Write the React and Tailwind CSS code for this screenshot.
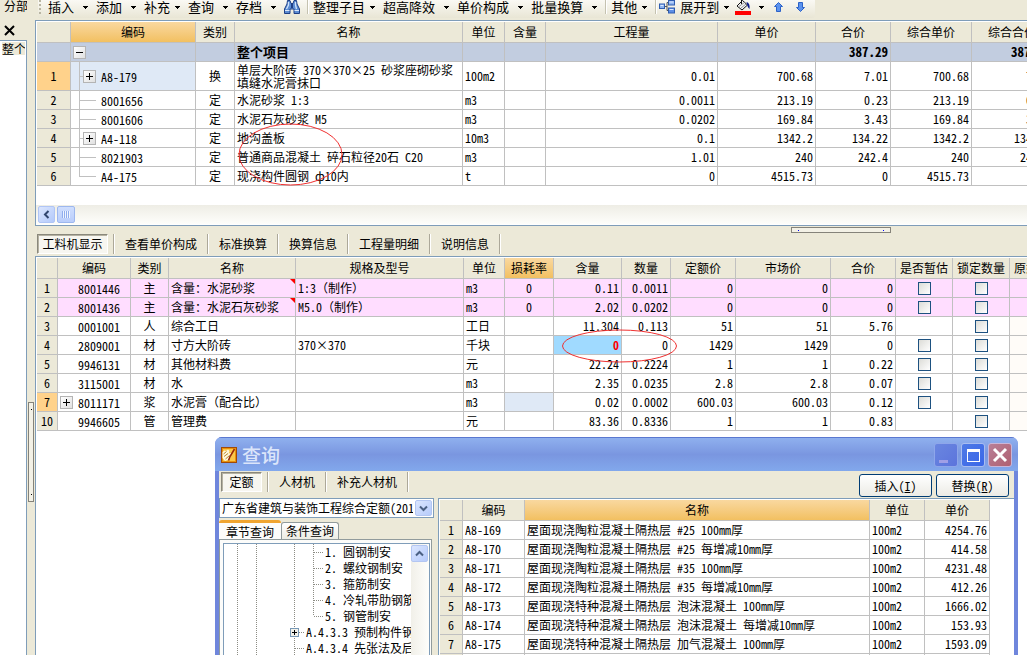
import React from "react";

const cx = (...c) => c.filter(Boolean).join(" ");

/* ---------- toolbar ---------- */

function Caret() {
  return (
    <svg width="5" height="3" viewBox="0 0 5 3" className="block shrink-0" shapeRendering="crispEdges">
      <path d="M0 0h5v1h-1v1h-1v1h-1v-1h-1v-1h-1z" fill="#000" />
    </svg>
  );
}

function MenuButton({ label, tight }) {
  return (
    <button type="button" className={cx("flex h-[14px] items-center whitespace-nowrap pr-[8px]", tight ? "gap-[5px]" : "gap-[9px]")}>
      {label}
      <Caret />
    </button>
  );
}

const Sep = () => <span className="h-[14px] w-[2px] shrink-0 border-l border-r border-l-[#c5c2b0] border-r-white" />;

function Binoculars() {
  return (
    <svg width="16" height="14" viewBox="0 0 16 14" className="block">
      <path d="M3.500 .5h2.500l1 3h2l1-3h2.500l.5 3.500 2.500 5v4.500h-5.500v-4.500h-4v4.500H.5V9L3 4z" fill="#5c8cd2" stroke="#1f3f86" />
      <path d="M4.500 2v3l-2 4M11.500 2v3l1 4" stroke="#cfe2fb" strokeWidth="1.300" fill="none" />
      <path d="M7 4h2v4H7z" fill="#1f3f86" />
      <path d="M1 10.500h4.500M10.500 10.500h4.500" stroke="#dbe8fb" />
    </svg>
  );
}

function ExpandIcon() {
  return (
    <svg width="16" height="14" viewBox="0 0 16 14" className="block">
      <path d="M5 6.500h3M8 2.500v8M8 2.500h2M8 10.500h2" stroke="#555" fill="none" />
      <rect x=".5" y="4" width="5" height="4.500" fill="#8fb4f0" stroke="#2f5db0" />
      <rect x="9.500" y=".5" width="6" height="4.500" fill="#8fb4f0" stroke="#2f5db0" />
      <rect x="9.500" y="8" width="6" height="5" fill="#5d8ee6" stroke="#2f5db0" />
      <path d="M10.500 2h4M10.500 9.500h4M1.500 5.500h3" stroke="#dce9ff" />
    </svg>
  );
}

function BucketIcon() {
  return (
    <svg width="16" height="15" viewBox="0 0 16 15" className="block">
      <path d="M7.500 0.500l5 4.500-5.500 5L2 6z" fill="#f4f4f4" stroke="#111" />
      <path d="M4 6.500l5.500-4M6 8l5-4" stroke="#999" />
      <path d="M6.500 4V0" stroke="#111" />
      <path d="M11.500 2c2.500.5 3.500 3 3 7-1.500-1-2-3-2.500-5z" fill="#0c1c8c" />
      <rect x="0" y="11" width="16" height="4" fill="#f00" />
    </svg>
  );
}

function ArrowIcon({ down }) {
  return (
    <svg width="9" height="10" viewBox="0 0 9 10" className="block">
      <path
        d={down ? "M4.500 9.500L.5 5.500h2v-5h4v5h2z" : "M4.500.5l4 4h-2v5h-4v-5h-2z"}
        fill="#5c93ee"
        stroke="#2c62c8"
      />
    </svg>
  );
}

function Toolbar() {
  return (
    <div className="h-[20px] bg-[#ece9d8] pl-[3px]">
      <div className="flex h-[18px] w-max items-start rounded-br-[3px] bg-gradient-to-b from-[#faf9f4] to-[#e9e6d5] pr-[10px] text-[13px] leading-[14px]">
        <svg width="10" height="15" viewBox="0 0 10 15" className="block" shapeRendering="crispEdges">
          <path d="M1 0h2v2h-2zM1 4h2v2h-2zM1 8h2v2h-2zM1 12h2v2h-2z" fill="#b8b5a3" />
        </svg>
        <MenuButton label="插入" />
        <MenuButton label="添加" />
        <MenuButton label="补充" tight />
        <MenuButton label="查询" />
        <MenuButton label="存档" />
        <button type="button" aria-label="查找" className="pr-[7px]">
          <Binoculars />
        </button>
        <Sep />
        <span className="w-[4px]" />
        <MenuButton label="整理子目" tight />
        <MenuButton label="超高降效" />
        <MenuButton label="单价构成" />
        <MenuButton label="批量换算" />
        <Sep />
        <span className="w-[4px]" />
        <MenuButton label="其他" tight />
        <Sep />
        <button type="button" className="flex h-[14px] items-center gap-[5px] whitespace-nowrap pl-[2px] pr-[6px]">
          <ExpandIcon />
          展开到
          <Caret />
        </button>
        <button type="button" aria-label="填充颜色" className="flex h-[15px] items-center gap-[8px] pr-[10px]">
          <BucketIcon />
          <Caret />
        </button>
        <button type="button" aria-label="上移" className="flex h-[14px] items-center pr-[13px]">
          <ArrowIcon />
        </button>
        <button type="button" aria-label="下移" className="flex h-[14px] items-center">
          <ArrowIcon down />
        </button>
      </div>
    </div>
  );
}

/* ---------- grid pieces ---------- */

const line = "border-r border-b border-[#c0c0c0]";
const headBg = "bg-[#ece9d8]";
const orangeHead = "bg-gradient-to-b from-[#f9d89f] to-[#f2c060]";

function Head({ children, active }) {
  return (
    <th className={cx("h-[21px] overflow-hidden whitespace-nowrap p-0 text-center font-normal leading-[18px]", line, active ? orangeHead : headBg)}>
      {children}
    </th>
  );
}

function Cell({ children, align = "left", className }) {
  return (
    <td
      className={cx(
        "h-[19px] overflow-hidden whitespace-nowrap px-[2px] py-0 leading-[18px]",
        line,
        align === "right" && "text-right",
        align === "center" && "text-center",
        className
      )}
    >
      {children}
    </td>
  );
}

function RowNo({ children, active }) {
  return (
    <th scope="row" className={cx("h-[19px] p-0 text-center font-normal leading-[18px]", line, active ? "bg-[#ffd28b]" : headBg)}>
      {children}
    </th>
  );
}

/* Full-width brackets keep their own width while latin text stays half-width. */
function Wide({ text }) {
  return text.split(/([（）])/).map((part, i) =>
    part === "（" || part === "）" ? (
      <span key={i} className="[font-feature-settings:normal]">
        {part}
      </span>
    ) : (
      part
    )
  );
}

function Toggle({ open }) {
  return (
    <button
      type="button"
      aria-label={open ? "折叠" : "展开"}
      className="flex size-[13px] shrink-0 items-center justify-center border border-[#b4b4b4] bg-gradient-to-br from-white to-[#e0e0e0]"
    >
      <svg width="7" height="7" viewBox="0 0 7 7" shapeRendering="crispEdges">
        <path d={open ? "M0 3h7v1h-7z" : "M0 3h7v1h-7zM3 0h1v7h-1z"} fill="#000" />
      </svg>
    </button>
  );
}

const Cols = ({ widths }) => (
  <colgroup>
    {widths.map((w, i) => (
      <col key={i} style={{ width: w }} />
    ))}
  </colgroup>
);

/* ---------- upper grid ---------- */

const items = [
  { n: 1, code: "A8-179", kind: "换", name: ["单层大阶砖 370×370×25 砂浆座砌砂浆", "填缝水泥膏抹口"], unit: "100m2", v: ["0.01", "700.68", "7.01", "700.68", "7.01"], plus: true, active: true },
  { n: 2, code: "8001656", kind: "定", name: ["水泥砂浆 1:3"], unit: "m3", v: ["0.0011", "213.19", "0.23", "213.19", "0.23"] },
  { n: 3, code: "8001606", kind: "定", name: ["水泥石灰砂浆 M5"], unit: "m3", v: ["0.0202", "169.84", "3.43", "169.84", "3.43"] },
  { n: 4, code: "A4-118", kind: "定", name: ["地沟盖板"], unit: "10m3", v: ["0.1", "1342.2", "134.22", "1342.2", "134.22"], plus: true },
  { n: 5, code: "8021903", kind: "定", name: ["普通商品混凝土 碎石粒径20石 C20"], unit: "m3", v: ["1.01", "240", "242.4", "240", "242.4"] },
  { n: 6, code: "A4-175", kind: "定", name: ["现浇构件圆钢 ф10内"], unit: "t", v: ["0", "4515.73", "0", "4515.73", "0"], last: true },
];

function TreeCode({ item }) {
  const tall = item.name.length > 1;
  const h = tall ? 29 : 19;
  const mid = tall ? 14 : 9;
  return (
    <div className={cx("flex items-center", tall ? "h-[28px]" : "h-[18px]")}>
      <svg width={item.plus ? 12 : 25} height={h} viewBox={`0 0 ${item.plus ? 12 : 25} ${h}`} className="block shrink-0 self-start overflow-visible" shapeRendering="crispEdges">
        <path d={`M8 0h1v${item.last ? mid : h}h-1zM8 ${mid}h${item.plus ? 4 : 17}v1h-${item.plus ? 4 : 17}z`} fill="#c0c0c0" />
      </svg>
      {item.plus && <Toggle />}
      <span className="pl-[5px] pt-[2px]">{item.code}</span>
    </div>
  );
}

function UpperGrid() {
  return (
    <section className="border-y border-l border-[#7f9db9] bg-white pt-px">
      <div className="overflow-hidden pl-px">
        <table className="w-[1016px] min-w-full table-fixed border-separate border-spacing-0">
          <Cols widths={[34, 125, 39, 228, 42, 41, 172, 98, 75, 81, 81]} />
          <thead>
            <tr>
              <Head />
              <Head active>编码</Head>
              {["类别", "名称", "单位", "含量", "工程量", "单价", "合价", "综合单价", "综合合价"].map((t) => (
                <Head key={t}>{t}</Head>
              ))}
            </tr>
          </thead>
          <tbody>
            <tr className="bg-[#c2cde0] text-[13px] font-bold">
              <th className={cx("h-[19px] p-0", line)} />
              <Cell>
                <div className="flex h-[18px] items-center">
                  <Toggle open />
                </div>
              </Cell>
              <Cell />
              <Cell>整个项目</Cell>
              <Cell />
              <Cell />
              <Cell />
              <Cell />
              <Cell align="right">387.29</Cell>
              <Cell />
              <Cell align="right">387.29</Cell>
            </tr>
            {items.map((it) => (
              <tr key={it.n}>
                <RowNo active={it.active}>{it.n}</RowNo>
                <td className={cx("p-0 leading-[16px]", line, it.active && "bg-[#dfe9f6]")}>
                  <TreeCode item={it} />
                </td>
                <Cell align="center">{it.kind}</Cell>
                {it.name.length > 1 ? (
                  <td className={cx("h-[29px] whitespace-nowrap px-[2px] py-0 leading-[13px]", line)}>
                    {it.name[0]}
                    <br />
                    {it.name[1]}
                  </td>
                ) : (
                  <Cell>{it.name[0]}</Cell>
                )}
                <Cell>{it.unit}</Cell>
                <Cell />
                {it.v.map((v, i) => (
                  <Cell key={i} align="right">
                    {v}
                  </Cell>
                ))}
              </tr>
            ))}
          </tbody>
        </table>
      </div>
      <div className="mb-px mt-[19px] flex h-[19px] gap-[2px] bg-gradient-to-b from-[#eeede5] to-[#fefefb] py-px pl-[2px]">
        <button type="button" aria-label="向左滚动" className="flex size-[17px] items-center justify-center rounded-[2px] border border-[#b0c5f5] bg-gradient-to-br from-[#dbe6fe] to-[#b3c9fa]">
          <svg width="7" height="9" viewBox="0 0 7 9">
            <path d="M5.500 1L2 4.500 5.500 8" stroke="#31466e" strokeWidth="2" fill="none" />
          </svg>
        </button>
        <span className="flex h-[17px] w-[18px] items-center justify-center rounded-[2px] border border-[#9db7ee] bg-gradient-to-b from-[#cfdefe] to-[#b9cdfb]">
          <svg width="8" height="7" viewBox="0 0 8 7" shapeRendering="crispEdges">
            <path d="M0 0h1v7h-1zM2 0h1v7h-1zM4 0h1v7h-1zM6 0h1v7h-1z" fill="#8fadee" />
            <path d="M1 0h1v7h-1zM3 0h1v7h-1zM5 0h1v7h-1zM7 0h1v7h-1z" fill="#eef4fe" />
          </svg>
        </span>
      </div>
    </section>
  );
}

/* ---------- tabs ---------- */

const pressedTab =
  "border border-b-white border-l-[#8a887c] border-r-white border-t-[#8a887c] bg-[#f7f6f0] text-center shadow-[inset_1px_1px_0_#b5b2a2]";

function FlatTabs({ first, firstClass, rest }) {
  return (
    <div className="flex h-[20px] leading-[18px]">
      <button type="button" className={cx("mr-[5px] whitespace-nowrap", pressedTab, firstClass)}>
        {first}
      </button>
      {rest.map((t) => (
        <React.Fragment key={t}>
          <span className="w-[2px] border-l border-r border-l-[#aca899] border-r-white" />
          <button type="button" className="whitespace-nowrap px-[10px]">
            {t}
          </button>
        </React.Fragment>
      ))}
      <span className="w-[2px] border-l border-r border-l-[#aca899] border-r-white" />
    </div>
  );
}

/* ---------- lower grid ---------- */

const resources = [
  { n: 1, code: "8001446", kind: "主", name: "含量：水泥砂浆", spec: "1:3（制作）", unit: "m3", loss: "0", v: ["0.11", "0.0011", "0", "0", "0"], est: true, pink: true },
  { n: 2, code: "8001436", kind: "主", name: "含量：水泥石灰砂浆", spec: "M5.0（制作）", unit: "m3", loss: "0", v: ["2.02", "0.0202", "0", "0", "0"], est: true, pink: true },
  { n: 3, code: "0001001", kind: "人", name: "综合工日", spec: "", unit: "工日", v: ["11.304", "0.113", "51", "51", "5.76"] },
  { n: 4, code: "2809001", kind: "材", name: "寸方大阶砖", spec: "370×370", unit: "千块", v: ["0", "0", "1429", "1429", "0"], est: true, marked: true },
  { n: 5, code: "9946131", kind: "材", name: "其他材料费", spec: "", unit: "元", v: ["22.24", "0.2224", "1", "1", "0.22"], est: true },
  { n: 6, code: "3115001", kind: "材", name: "水", spec: "", unit: "m3", v: ["2.35", "0.0235", "2.8", "2.8", "0.07"], est: true },
  { n: 7, code: "8011171", kind: "浆", name: "水泥膏（配合比）", spec: "", unit: "m3", v: ["0.02", "0.0002", "600.03", "600.03", "0.12"], est: true, active: true },
  { n: 10, code: "9946605", kind: "管", name: "管理费", spec: "", unit: "元", v: ["83.36", "0.8336", "1", "1", "0.83"] },
];

const Check = ({ label }) => (
  <input
    type="checkbox"
    aria-label={label}
    className="mx-auto block size-[13px] appearance-none border border-[#1d5180] bg-gradient-to-br from-[#dcdcd7] to-white checked:bg-[#21a121]"
  />
);

function LowerGrid() {
  return (
    <section className="min-h-0 flex-1 overflow-hidden border-l border-t border-[#7f9db9] bg-white pl-px pt-px">
      <table className="w-[1030px] min-w-full table-fixed border-separate border-spacing-0">
        <Cols widths={[21, 73, 38, 127, 168, 41, 49, 68, 49, 65, 95, 65, 57, 57, 57]} />
        <thead>
          <tr>
            <Head />
            {["编码", "类别", "名称", "规格及型号", "单位", "损耗率", "含量", "数量", "定额价", "市场价", "合价", "是否暂估", "锁定数量", "原始含量"].map((t) => (
              <Head key={t} active={t === "损耗率"}>
                {t}
              </Head>
            ))}
          </tr>
        </thead>
        <tbody>
          {resources.map((r) => (
            <tr key={r.n} className={r.pink ? "bg-[#ffddff]" : "bg-white"}>
              <RowNo active={r.active}>{r.n}</RowNo>
              <Cell>
                <div className="flex h-[18px] items-center">
                  <span className="flex w-[18px] shrink-0">{r.active && <Toggle />}</span>
                  <span className="pt-[2px] leading-[16px]">{r.code}</span>
                </div>
              </Cell>
              <Cell align="center">{r.kind}</Cell>
              <Cell className="relative">
                <Wide text={r.name} />
                {r.pink && (
                  <svg width="5" height="5" viewBox="0 0 5 5" className="absolute right-0 top-0">
                    <path d="M0 0h5v5z" fill="#f00" />
                  </svg>
                )}
              </Cell>
              <Cell>
                <Wide text={r.spec} />
              </Cell>
              <Cell>{r.unit}</Cell>
              <Cell align="center" className={r.active && "bg-[#dfe9f6]"}>
                {r.loss}
              </Cell>
              {r.v.map((v, i) => (
                <Cell key={i} align="right" className={r.marked && i === 0 && "bg-[#a0daff] font-bold text-[#f00]"}>
                  {v}
                </Cell>
              ))}
              <Cell>{r.est && <Check label={`是否暂估 ${r.code}`} />}</Cell>
              <Cell>
                <Check label={`锁定数量 ${r.code}`} />
              </Cell>
              <Cell className={!r.pink && "bg-[#fffcf8]"} />
            </tr>
          ))}
        </tbody>
      </table>
    </section>
  );
}

/* ---------- query dialog ---------- */

const quotas = [
  ["A8-169", "屋面现浇陶粒混凝土隔热层 #25 100mm厚", "4254.76"],
  ["A8-170", "屋面现浇陶粒混凝土隔热层 #25 每增减10mm厚", "414.58"],
  ["A8-171", "屋面现浇陶粒混凝土隔热层 #35 100mm厚", "4231.48"],
  ["A8-172", "屋面现浇陶粒混凝土隔热层 #35 每增减10mm厚", "412.26"],
  ["A8-173", "屋面现浇特种混凝土隔热层 泡沫混凝土 100mm厚", "1666.02"],
  ["A8-174", "屋面现浇特种混凝土隔热层 泡沫混凝土 每增减10mm厚", "153.93"],
  ["A8-175", "屋面现浇特种混凝土隔热层 加气混凝土 100mm厚", "1593.09"],
];

const chapters = [
  { t: "1. 圆钢制安" },
  { t: "2. 螺纹钢制安" },
  { t: "3. 箍筋制安" },
  { t: "4. 冷轧带肋钢筋制安" },
  { t: "5. 钢管制安", last: true },
  { t: "A.4.3.3 预制构件钢筋", up: true, plus: true },
  { t: "A.4.3.4 先张法及后张法", up: true },
];

function ChapterRow({ c }) {
  const w = c.up ? 82 : 101;
  return (
    <li className="flex h-[16px] items-center whitespace-nowrap leading-[16px]">
      <svg width={w} height="16" viewBox={`0 0 ${w} 16`} className="block shrink-0" shapeRendering="crispEdges">
        <g stroke="#8c8c84" strokeDasharray="1 1" fill="none">
          <path d="M13.500 0v16M32.500 0v16M70.500 0v16" />
          {!c.up && <path d={c.last ? "M89.500 0v8" : "M89.500 0v16"} />}
          <path d={c.up ? "M71 8.500h9" : "M90 8.500h9"} />
        </g>
        {c.plus && (
          <>
            <rect x="66.500" y="4.500" width="8" height="8" fill="#f2f1ea" stroke="#7898b5" />
            <path d="M68 8h5v1h-5zM70 6h1v5h-1z" fill="#000" />
          </>
        )}
      </svg>
      {c.t}
    </li>
  );
}

const arrowBox =
  "flex items-center justify-center rounded-[2px] border border-[#b3c6f2] bg-gradient-to-br from-[#dbe6fe] to-[#b6cbfb]";

function ChapterPane() {
  return (
    <div className="flex w-[215px] shrink-0 flex-col">
      <div className="flex h-[20px] border border-[#7f9db9] bg-white pr-px">
        <select aria-label="定额库" className="min-w-0 flex-1 appearance-none overflow-hidden bg-white pl-[2px] leading-[18px]">
          <option>广东省建筑与装饰工程综合定额(2010)</option>
        </select>
        <span className={cx("my-px ml-[2px] w-[17px]", arrowBox)}>
          <svg width="9" height="7" viewBox="0 0 9 7">
            <path d="M1 1.500L4.500 5 8 1.500" stroke="#4a6083" strokeWidth="2" fill="none" />
          </svg>
        </span>
      </div>
      <div className="mt-[2px] flex h-[19px] items-end">
        <button type="button" className="h-[19px] rounded-t-[3px] border-t-[3px] border-[#f0a530] bg-[#fcfcfa] px-[7px] leading-[15px]">
          章节查询
        </button>
        <button type="button" className="h-[17px] rounded-t-[3px] border border-b-0 border-[#919b9c] bg-gradient-to-b from-white to-[#edede4] px-[4px] leading-[16px]">
          条件查询
        </button>
      </div>
      <div className="mr-[2px] flex min-h-0 flex-1 border border-b-0 border-[#919b9c] bg-[#fcfcfa] pl-[3px] pr-px pt-[3px]">
        <div className="flex min-w-0 flex-1 border border-b-0 border-[#7f9db9] bg-white">
          <ul className="min-w-0 flex-1 overflow-hidden">
            {chapters.map((c) => (
              <ChapterRow key={c.t} c={c} />
            ))}
          </ul>
          <div className="w-[18px] shrink-0 bg-gradient-to-r from-[#f1f0e9] to-[#fefefb] pt-px">
            <button type="button" aria-label="向上滚动" className={cx("size-[17px]", arrowBox)}>
              <svg width="9" height="7" viewBox="0 0 9 7">
                <path d="M1 5.500L4.500 2 8 5.500" stroke="#4a6083" strokeWidth="2" fill="none" />
              </svg>
            </button>
          </div>
        </div>
      </div>
    </div>
  );
}

function QuotaGrid() {
  return (
    <div className="min-w-0 flex-1 overflow-hidden border-l border-t border-[#7f9db9] bg-white pl-px pt-px">
      <table className="w-[550px] table-fixed border-separate border-spacing-0">
        <Cols widths={[23, 62, 345, 55, 65]} />
        <thead>
          <tr>
            <Head />
            <Head>编码</Head>
            <Head active>名称</Head>
            <Head>单位</Head>
            <Head>单价</Head>
          </tr>
        </thead>
        <tbody>
          {quotas.map((q, i) => (
            <tr key={q[0]}>
              <RowNo>{i + 1}</RowNo>
              <Cell>{q[0]}</Cell>
              <Cell>{q[1]}</Cell>
              <Cell>100m2</Cell>
              <Cell align="right">{q[2]}</Cell>
            </tr>
          ))}
          <tr>
            <RowNo />
            <Cell />
            <Cell />
            <Cell />
            <Cell />
          </tr>
        </tbody>
      </table>
    </div>
  );
}

const dialogButton =
  "h-[23px] w-[73px] rounded-[3px] border border-[#003c74] bg-gradient-to-b from-white to-[#ecebe5] leading-[20px]";

function QueryDialog() {
  return (
    <div
      role="dialog"
      aria-label="查询"
      className="absolute bottom-0 left-[215px] right-[9px] top-[437px] flex flex-col overflow-hidden rounded-t-[7px] bg-[#6f86dc] px-[4px]"
    >
      <header className="-mx-[4px] flex h-[34px] shrink-0 items-center border-t border-[#5a78d0] bg-gradient-to-b from-[#8fb0ee] via-[#7a96e0] to-[#82a8ec] pl-[6px] pr-[6px]">
        <svg width="16" height="16" viewBox="0 0 16 16" className="block">
          <rect x=".5" y=".5" width="15" height="15" fill="#e8920c" stroke="#a04a08" />
          <rect x="2" y="2" width="12" height="12" fill="#fbc64a" />
          <path d="M1.500 5l2-1.500 1.500.5 2-1.500 1.500 1.500-1 2.500 2.500-.5v3l-2 3.500-4 1.500-2.500-3z" fill="#fff8dc" />
          <path d="M2.500 7l3-2.500M3 9.500l4-3M4.500 12l4-3.500" stroke="#b8862a" />
          <path d="M13.500 2L9 9.500l-1.500 4" stroke="#9a2a08" strokeWidth="1.600" fill="none" />
        </svg>
        <h2 className="flex-1 pl-[5px] text-[19px] font-medium leading-[24px] text-[#dbe5fa]">查询</h2>
        <div className="flex gap-[3px]">
          <button type="button" aria-label="最小化" className="size-[24px] rounded-[3px] border border-[#8ea6ea] bg-gradient-to-br from-[#6a86e0] to-[#5c74dc]">
            <svg width="22" height="22" viewBox="0 0 22 22">
              <rect x="4" y="16" width="9" height="3" fill="#a09fe6" />
            </svg>
          </button>
          <button type="button" aria-label="最大化" className="size-[24px] rounded-[3px] border border-[#a9bdf0] bg-gradient-to-br from-[#4f7ae6] to-[#3a66e8]">
            <svg width="22" height="22" viewBox="0 0 22 22" shapeRendering="crispEdges">
              <path d="M5 5h13v13h-13zM6 8v9h11v-9z" fill="#fff" fillRule="evenodd" />
            </svg>
          </button>
          <button type="button" aria-label="关闭" className="size-[24px] rounded-[3px] border border-[#c9b6d8] bg-gradient-to-br from-[#b87f98] to-[#b06070]">
            <svg width="22" height="22" viewBox="0 0 22 22">
              <path d="M5 5l12 12M17 5L5 17" stroke="#fff" strokeWidth="3" />
            </svg>
          </button>
        </div>
      </header>
      <div className="flex min-h-0 flex-1 flex-col bg-[#ece9d8]">
        <div className="flex h-[27px] shrink-0 justify-between pl-[2px] pr-[5px]">
          <div className="pt-px">
            <FlatTabs first="定额" firstClass="w-[41px]" rest={["人材机", "补充人材机"]} />
          </div>
          <div className="flex gap-[4px] pt-[3px]">
            <button type="button" className={dialogButton}>
              插入(<u>I</u>)
            </button>
            <button type="button" className={dialogButton}>
              替换(<u>R</u>)
            </button>
          </div>
        </div>
        <div className="flex min-h-0 flex-1 gap-[4px]">
          <ChapterPane />
          <QuotaGrid />
        </div>
      </div>
    </div>
  );
}

/* ---------- page ---------- */

export default function App() {
  return (
    <div
      lang="zh-CN"
      className="relative flex h-screen overflow-hidden bg-[#ece9d8] font-['Noto_Sans_CJK_SC','Liberation_Sans',sans-serif] text-[12px] leading-[18px] text-black [font-feature-settings:'hwid']"
    >
      <aside className="flex w-[27px] shrink-0 flex-col">
        <div className="h-[20px] overflow-hidden whitespace-nowrap pl-[4px] leading-[12px]">分部</div>
        <button type="button" aria-label="关闭" className="h-[20px] pl-[4px]">
          <svg width="11" height="11" viewBox="0 0 11 11" className="block">
            <path d="M1 1l9 9M10 1l-9 9" stroke="#000" strokeWidth="2" />
          </svg>
        </button>
        <div className="flex-1 overflow-hidden border-r border-t border-[#7f9db9] bg-white pl-[2px] pt-px">
          <div className="w-[23px] overflow-hidden whitespace-nowrap bg-[#ece9d8] leading-[13px]">整个项目</div>
        </div>
      </aside>
      <div className="w-[8px] shrink-0 pl-px pt-[402px]">
        <div className="flex h-[100px] w-[6px] flex-col items-center justify-between border border-[#85837a] bg-[#f3f1e6] py-[6px]">
          <span className="size-px bg-black" />
          <span className="size-px bg-black" />
        </div>
      </div>
      <main className="flex min-w-0 flex-1 flex-col">
        <Toolbar />
        <UpperGrid />
        <div className="flex h-[8px] shrink-0 justify-end pr-[136px] pt-px">
          <div className="flex h-[6px] w-[100px] items-center justify-between border border-[#85837a] bg-[#f3f1e6] px-[6px]">
            <span className="size-px bg-[#00f]" />
            <span className="size-px bg-[#00f]" />
          </div>
        </div>
        <div className="shrink-0 pb-[2px] pl-[2px]">
          <FlatTabs first="工料机显示" firstClass="w-[71px]" rest={["查看单价构成", "标准换算", "换算信息", "工程量明细", "说明信息"]} />
        </div>
        <LowerGrid />
      </main>
      <svg width="700" height="400" viewBox="0 0 700 400" className="pointer-events-none absolute left-0 top-0" fill="none" stroke="#f03030">
        <ellipse cx="290.500" cy="154.500" rx="51.500" ry="30.500" />
        <ellipse cx="619.500" cy="346" rx="57" ry="16" />
      </svg>
      <QueryDialog />
    </div>
  );
}
